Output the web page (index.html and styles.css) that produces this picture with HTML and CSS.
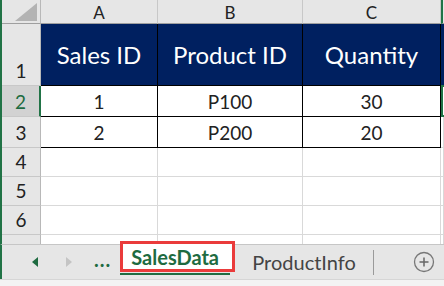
FILE: index.html
```html
<!DOCTYPE html>
<html lang="en">
<head>
    <meta charset="UTF-8">
    <meta name="viewport" content="width=device-width, initial-scale=1.0">
    <title>SalesData</title>
    <link rel="stylesheet" href="styles.css">
</head>
<body>
    <div class="excel">
        <div class="sheet">
            <!-- cabecalho das colunas -->
            <div class="cell corner">
                <svg width="22" height="18" viewBox="0 0 22 18"><polygon points="22,0 22,18 0,18" fill="#b3b3b3"/></svg>
            </div>
            <div class="cell colhead">A</div>
            <div class="cell colhead">B</div>
            <div class="cell colhead">C</div>
            <div class="cell colhead col-d"></div>

            <!-- linha 1 -->
            <div class="cell rowhead">1</div>
            <div class="cell title">Sales ID</div>
            <div class="cell title">Product ID</div>
            <div class="cell title">Quantity</div>
            <div class="cell title-d"></div>

            <!-- linha 2 -->
            <div class="cell rowhead active">2</div>
            <div class="cell data">1</div>
            <div class="cell data">P100</div>
            <div class="cell data">30</div>
            <div class="cell selected"></div>

            <!-- linha 3 -->
            <div class="cell rowhead">3</div>
            <div class="cell data">2</div>
            <div class="cell data">P200</div>
            <div class="cell data">20</div>
            <div class="cell blank"></div>

            <div class="cell rowhead">4</div>
            <div class="cell blank"></div>
            <div class="cell blank"></div>
            <div class="cell blank"></div>
            <div class="cell blank"></div>

            <div class="cell rowhead">5</div>
            <div class="cell blank"></div>
            <div class="cell blank"></div>
            <div class="cell blank"></div>
            <div class="cell blank"></div>

            <div class="cell rowhead">6</div>
            <div class="cell blank"></div>
            <div class="cell blank"></div>
            <div class="cell blank"></div>
            <div class="cell blank"></div>

            <div class="cell rowhead top">7</div>
            <div class="cell blank"></div>
            <div class="cell blank"></div>
            <div class="cell blank"></div>
            <div class="cell blank"></div>
        </div>

        <div class="tabbar">
            <svg class="arrow" width="6" height="10" viewBox="0 0 6 10"><polygon points="6,0 6,10 0,5" fill="#1e6b41"/></svg>
            <svg class="arrow next" width="6" height="10" viewBox="0 0 6 10"><polygon points="0,0 0,10 6,5" fill="#c4c4c4"/></svg>
            <span class="dots">...</span>
            <div class="tab active-tab">SalesData</div>
            <div class="tab">ProductInfo</div>
            <span class="sep"></span>
            <svg class="add" width="22" height="22" viewBox="0 0 22 22">
                <circle cx="11" cy="11" r="9.5" fill="none" stroke="#777" stroke-width="1.3"/>
                <path d="M11 6.5v9M6.5 11h9" stroke="#666" stroke-width="1.5"/>
            </svg>
        </div>
        <div class="statusbar"></div>
    </div>
</body>
</html>
```

FILE: styles.css
```css
body {
    margin: 0;
    font-family: Lato, "Open Sans", sans-serif;
    background-color: #fff;
    overflow: hidden;
}

.excel {
    width: 444px;
    height: 286px;
}

.sheet {
    display: grid;
    grid-template-columns: 39px 117px 145px 138px 3px;
    grid-template-rows: 24px 62px 31px 31px 29px 29px 29px 29px;
    height: 244px;
    overflow: hidden;
    border-left: 2px solid #217346;
}

.cell {
    box-sizing: border-box;
    border-right: 1px solid #d9d9d9;
    border-bottom: 1px solid #d9d9d9;
    display: flex;
    justify-content: center;
    color: #222;
}

.corner {
    background-color: #e6e6e6;
    border-right: 1px solid #b8b8b8;
    border-bottom: 1px solid #9f9f9f;
    justify-content: flex-end;
    padding: 3px 3px 0 0;
}

.colhead {
    background-color: #e6e6e6;
    border-right: 1px solid #c8c8c8;
    border-bottom: 1px solid #9f9f9f;
    align-items: center;
    font-size: 17px;
    padding-top: 1px;
}

.col-d {
    border-right: none;
    border-left: 2px solid #217346;
}

.rowhead {
    background-color: #e6e6e6;
    border-right: 1px solid #b8b8b8;
    border-bottom: 1px solid #c8c8c8;
    align-items: flex-end;
    font-size: 19px;
    line-height: 1;
    padding-bottom: 5px;
}

.rowhead.top {
    align-items: flex-start;
    padding-top: 6px;
}

.rowhead.active {
    background-color: #d2d2d2;
    color: #1e6b41;
    border-right: 2px solid #217346;
}

.title {
    background-color: #002060;
    color: #fff;
    border-right: 1px solid #000;
    border-bottom: 1px solid #000;
    align-items: center;
    font-size: 24px;
}

.title-d {
    background-color: #002060;
    border-bottom: 1px solid #000;
    border-right: none;
}

.data {
    border-right: 1px solid #000;
    border-bottom: 1px solid #000;
    align-items: flex-end;
    font-size: 19px;
    line-height: 1;
    padding-bottom: 5px;
}

.selected {
    border: 2px solid #217346;
    border-right: none;
    margin-top: -1px;
}

.blank {
    background-color: #fff;
}

.tabbar {
    display: flex;
    align-items: center;
    height: 35px;
    box-sizing: border-box;
    background-color: #e6e6e6;
    border-top: 1px solid #c6c6c6;
    border-left: 2px solid #217346;
}

.arrow {
    margin-left: 30px;
}

.arrow.next {
    margin-left: 28px;
}

.dots {
    margin-left: 22px;
    color: #1e6b41;
    font-weight: bold;
    font-size: 20px;
    letter-spacing: 1px;
    margin-top: -6px;
}

.tab {
    font-size: 20px;
    color: #444;
    margin-left: 17px;
}

.active-tab {
    position: relative;
    align-self: flex-start;
    margin-top: -4px;
    margin-left: 9px;
    height: 31px;
    width: 115px;
    box-sizing: border-box;
    border: 3px solid #ea3b3b;
    background-color: #fff;
    color: #1e6b41;
    font-weight: bold;
    padding-left: 8px;
    display: flex;
    align-items: center;
}

.active-tab::after {
    content: "";
    position: absolute;
    left: -3px;
    right: 2px;
    bottom: -6px;
    height: 2px;
    background-color: #1e6b41;
}

.sep {
    width: 1px;
    height: 25px;
    background-color: #9a9a9a;
    margin-left: 17px;
}

.add {
    margin-left: 39px;
}

.statusbar {
    height: 7px;
    background-color: #f3f3f3;
    border-top: 1px solid #d6d6d6;
}
```
